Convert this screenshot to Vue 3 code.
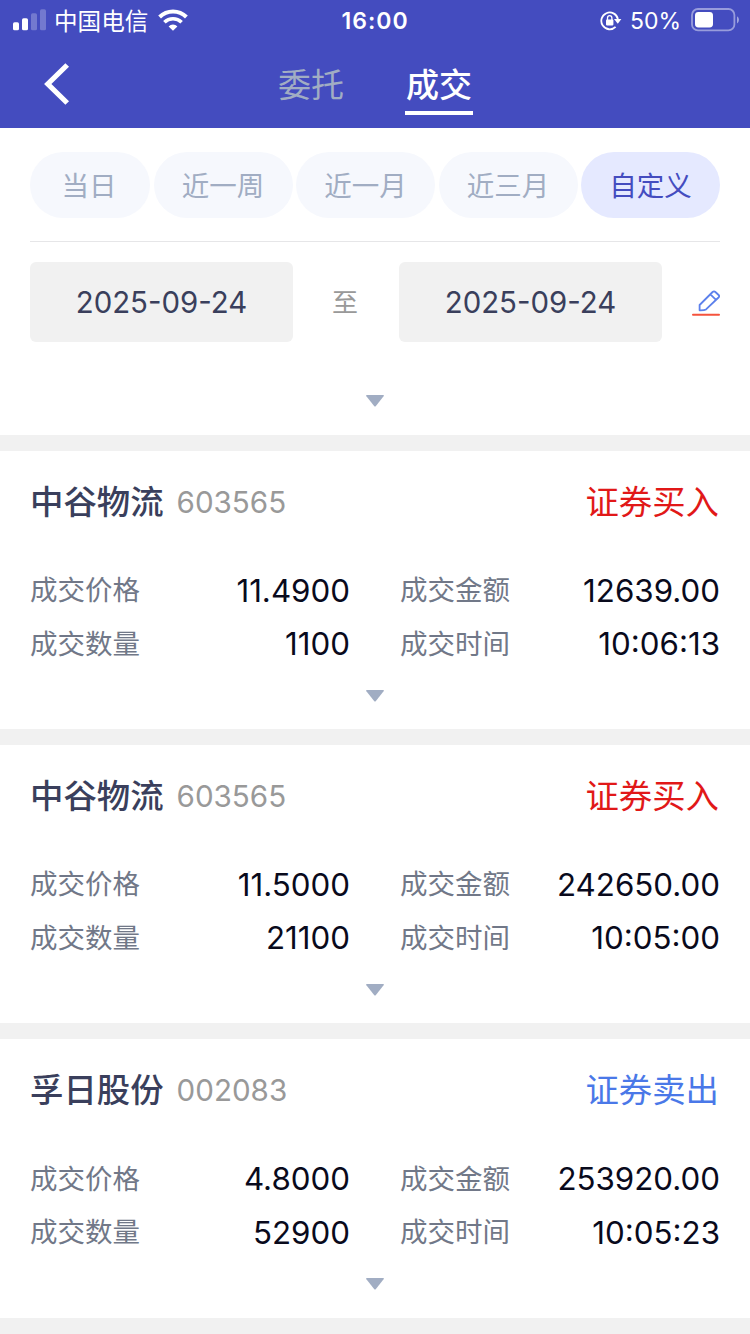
<script setup>
const tabs = ['委托', '成交']
const ranges = ['当日', '近一周', '近一月', '近三月', '自定义']

const trades = [
  { name: '中谷物流', code: '603565', side: '证券买入', type: 'buy', price: '11.4900', amount: '12639.00', qty: '1100', time: '10:06:13' },
  { name: '中谷物流', code: '603565', side: '证券买入', type: 'buy', price: '11.5000', amount: '242650.00', qty: '21100', time: '10:05:00' },
  { name: '孚日股份', code: '002083', side: '证券卖出', type: 'sell', price: '4.8000', amount: '253920.00', qty: '52900', time: '10:05:23' },
]
</script>

<template>
  <div class="screen">
    <header class="header">
      <div class="status">
        <div class="status-left">
          <svg class="signal" width="34" height="22" viewBox="0 0 34 22" fill="#fff">
            <rect x="0" y="13.3" width="6" height="8" rx="1.6" />
            <rect x="9" y="9.3" width="6" height="12" rx="1.6" />
            <rect x="18" y="4.3" width="6" height="17" rx="1.6" opacity=".25" />
            <rect x="27" y="0.3" width="6" height="21" rx="1.6" opacity=".25" />
          </svg>
          <span class="carrier">中国电信</span>
          <svg class="wifi" width="30" height="22" viewBox="0 0 30 22" fill="none" stroke="#fff">
            <path d="M1.6 8A19.2 19.2 0 0 1 28.4 8" stroke-width="4" />
            <path d="M6.4 13.2A12.4 12.4 0 0 1 23.6 13.2" stroke-width="3.6" />
            <path d="M15 21.8L10.6 17.4A6.3 6.3 0 0 1 19.4 17.4Z" fill="#fff" stroke="none" />
          </svg>
        </div>
        <span class="clock">16:00</span>
        <div class="status-right">
          <svg class="lock" width="22" height="20" viewBox="0 0 22 20" fill="none" stroke="#fff">
            <path d="M15.6 15.9A8.4 8.4 0 1 1 17.9 8" stroke-width="1.8" />
            <path d="M14 8H21.4L17.8 12.8Z" fill="#fff" stroke="none" />
            <rect x="6" y="8.6" width="7.4" height="5.8" rx=".8" fill="#fff" stroke="none" />
            <path d="M7.5 9V7A2.2 2.4 0 0 1 11.9 7V9" stroke-width="1.3" />
          </svg>
          <span class="percent">50%</span>
          <svg class="battery" width="48" height="24" viewBox="0 0 48 24">
            <rect x="1" y="1" width="42.4" height="21.4" rx="6" fill="none" stroke="#fff" stroke-opacity=".45" stroke-width="1.8" />
            <rect x="4" y="4" width="18" height="15.4" rx="3.4" fill="#fff" />
            <path d="M46 8.2Q48 9.4 48 11.8T46 15.4Z" fill="#fff" opacity=".5" />
          </svg>
        </div>
      </div>
      <nav class="nav">
        <svg class="back" width="28" height="42" viewBox="0 0 28 42">
          <path d="M24.2 2L4.8 21L24.2 40" fill="none" stroke="#fff" stroke-width="5.2" />
        </svg>
        <span v-for="(t, i) in tabs" :key="t" class="tab" :class="{ active: i === 1 }">{{ t }}</span>
      </nav>
    </header>

    <section class="filter">
      <div class="ranges">
        <span v-for="(r, i) in ranges" :key="r" class="range" :class="{ active: i === 4 }">{{ r }}</span>
      </div>
      <div class="dates">
        <span class="date">2025-09-24</span>
        <span class="to">至</span>
        <span class="date">2025-09-24</span>
        <svg class="edit" width="28" height="28" viewBox="0 0 28 28" fill="none">
          <path d="M7.6 22.3V17L20.6 4Q22 2.6 23.4 4L26.6 7Q27.8 8.2 26.5 9.5L14 21.4Q12.5 22.4 7.6 22.3ZM18.4 6.4L24 11.8" stroke="#5c80ec" stroke-width="1.8" stroke-linejoin="round" />
          <path d="M1 26.7H27" stroke="#f5533d" stroke-width="2" stroke-linecap="round" />
        </svg>
      </div>
      <svg class="arrow" width="18" height="12" viewBox="0 0 18 12"><path d="M.8 0H17.2Q18.4.2 17.6 1.3L9.9 11Q9 12 8.1 11L.4 1.3Q-.4.2 .8 0Z" fill="#a1adc3" /></svg>
    </section>

    <article v-for="(t, i) in trades" :key="i" class="card">
      <div class="title">
        <span class="name">{{ t.name }}</span>
        <span class="code">{{ t.code }}</span>
        <span class="side" :class="t.type">{{ t.side }}</span>
      </div>
      <div class="grid">
        <div class="cell"><span class="label">成交价格</span><span class="value">{{ t.price }}</span></div>
        <div class="cell"><span class="label">成交金额</span><span class="value">{{ t.amount }}</span></div>
        <div class="cell"><span class="label">成交数量</span><span class="value">{{ t.qty }}</span></div>
        <div class="cell"><span class="label">成交时间</span><span class="value">{{ t.time }}</span></div>
      </div>
      <svg class="arrow" width="18" height="12" viewBox="0 0 18 12"><path d="M.8 0H17.2Q18.4.2 17.6 1.3L9.9 11Q9 12 8.1 11L.4 1.3Q-.4.2 .8 0Z" fill="#a1adc3" /></svg>
    </article>
  </div>
</template>

<style>
body {
  background: #f1f1f1;
}
</style>

<style scoped>
.screen {
  width: 750px;
  height: 1334px;
  overflow: hidden;
  background: #f1f1f1;
  font-family: Inter, "Noto Sans CJK SC", sans-serif;
  white-space: nowrap;
}
.header {
  height: 128px;
  background: #444cbf;
  color: #fff;
}
.status {
  height: 40px;
  display: grid;
  grid-template-columns: 1fr auto 1fr;
  align-items: center;
}
.status-left,
.status-right {
  display: flex;
  align-items: center;
}
.status-left {
  padding-left: 13px;
}
.carrier {
  margin-left: 7px;
  padding-top: 3px;
  font-size: 23.6px;
  line-height: 37px;
}
.wifi {
  margin-left: 10px;
}
.clock {
  padding-top: 2px;
  font-size: 23px;
  font-weight: 600;
  letter-spacing: 1px;
}
.status-right {
  justify-content: flex-end;
  padding-right: 11px;
}
.lock {
  margin-top: 2px;
}
.percent {
  margin: 2px 10px 0 8px;
  font-size: 23px;
}
.nav {
  height: 88px;
  display: flex;
  align-items: center;
}
.back {
  margin: 0 206px 0 43px;
}
.tab {
  height: 62px;
  width: 68px;
  box-sizing: border-box;
  margin-right: 60px;
  padding-top: 3px;
  line-height: 59px;
  text-align: center;
  font-size: 33px;
  color: #a1adc3;
}
.tab.active {
  color: #fff;
  font-weight: 500;
  border-bottom: 4px solid #fff;
}
.filter {
  height: 307px;
  box-sizing: border-box;
  padding: 24px 30px 0;
  background: #fff;
}
.ranges {
  display: flex;
  justify-content: space-between;
  padding-bottom: 23px;
  border-bottom: 1px solid #e6e6e8;
}
.range {
  width: 139px;
  height: 66px;
  box-sizing: border-box;
  padding-top: 2px;
  line-height: 64px;
  border-radius: 33px;
  background: #f6f8fd;
  color: #a1adc3;
  font-size: 27.5px;
  text-align: center;
}
.range:first-child {
  width: 120px;
  padding-right: 2px;
}
.range.active {
  background: #e5e9ff;
  color: #444cbf;
}
.dates {
  display: flex;
  align-items: center;
  margin-top: 20px;
}
.date {
  width: 263px;
  height: 80px;
  box-sizing: border-box;
  padding-top: 2px;
  line-height: 78px;
  border-radius: 6px;
  background: #f1f1f1;
  color: #3a3f5c;
  font-size: 29.4px;
  text-align: center;
}
.to {
  width: 104px;
  padding: 0 2px 3px 0;
  text-align: center;
  color: #999;
  font-size: 26px;
}
.edit {
  margin-left: 30px;
}
.arrow {
  display: block;
  margin: 0 auto;
}
.filter .arrow {
  margin-top: 53px;
}
.card {
  height: 278.2px;
  box-sizing: border-box;
  margin-top: 16px;
  padding: 24px 30px 0;
  background: #fff;
}
.title {
  display: flex;
  align-items: center;
  height: 54px;
}
.name {
  padding-bottom: 5px;
  color: #3a3f5c;
  font-size: 33.4px;
  font-weight: 500;
}
.code {
  margin-left: 13px;
  padding-bottom: 1px;
  color: #999;
  font-size: 29.6px;
}
.side {
  margin-left: auto;
  padding: 0 1px 5px 0;
  font-size: 33.4px;
}
.buy {
  color: #e11818;
}
.sell {
  color: #4a78e8;
}
.grid {
  display: grid;
  grid-template-columns: 320px 320px;
  column-gap: 50px;
  grid-auto-rows: 53.5px;
  margin-top: 35px;
}
.cell {
  display: flex;
  justify-content: space-between;
  align-items: center;
}
.label {
  padding-bottom: 5px;
  color: #717888;
  font-size: 27.5px;
}
.value {
  color: #090a1c;
  font-size: 31.3px;
}
.card .arrow {
  margin-top: 18.5px;
}
</style>
